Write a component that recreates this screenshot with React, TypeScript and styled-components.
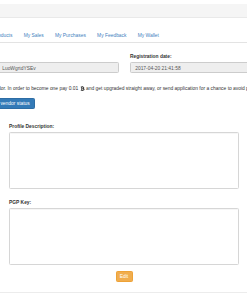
import styled, { createGlobalStyle } from "styled-components";
import { FaBtc } from "react-icons/fa";

const GlobalStyle = createGlobalStyle`
  html, body {
    margin: 0;
    padding: 0;
    background: #fff;
    overflow: hidden;
  }
  body {
    font-family: "Liberation Sans", Arial, sans-serif;
    font-size: 4.9px;
    line-height: 7px;
    color: #333;
  }
`;

const TopBar = styled.div`
  margin-top: 4px;
  height: 13px;
  background: #f5f5f5;
  border-bottom: 1px solid #e9e9e9;
`;

const Page = styled.div`
  margin-left: -20px;
  width: 287px;
`;

const Tabs = styled.ul`
  display: flex;
  list-style: none;
  margin: 10px 0 0;
  padding: 0;
  border-bottom: 1px solid #e3e3e3;
`;

const Tab = styled.li`
  margin-right: 0.7px;
  a {
    display: block;
    padding: 3.5px 5.25px;
    color: #3f7fc0;
    text-decoration: none;
    white-space: nowrap;
  }
`;

const Fields = styled.div`
  display: grid;
  grid-template-columns: 122px 122px;
  column-gap: 11px;
  align-items: end;
  margin: 10px 0 0 17px;
`;

const Field = styled.div`
  display: flex;
  flex-direction: column;
`;

const Label = styled.label`
  display: block;
  font-weight: bold;
  margin-bottom: 1.75px;
  white-space: nowrap;
`;

const Input = styled.div`
  box-sizing: border-box;
  height: 11.5px;
  padding: 2.2px 4.2px;
  background: #eee;
  border: 0.5px solid #ccc;
  border-radius: 1.4px;
  color: #555;
  white-space: nowrap;
  overflow: hidden;
`;

const Vendor = styled.div`
  padding-left: 6px;
  margin-top: 12px;
`;

const Notice = styled.p`
  margin: 0 0 5.5px;
  white-space: nowrap;
  svg {
    font-size: 5.2px;
    vertical-align: -0.6px;
    color: #222;
  }
`;

const Button = styled.button<{ $tone: "primary" | "warning" }>`
  display: inline-block;
  box-sizing: border-box;
  height: 11.5px;
  padding: 0 4.2px;
  border: 0.5px solid ${(p) => (p.$tone === "primary" ? "#2e6da4" : "#eea236")};
  border-radius: 1.4px;
  background: ${(p) => (p.$tone === "primary" ? "#337ab7" : "#f0ad4e")};
  color: #fff;
  font-family: inherit;
  font-size: 4.9px;
  line-height: 7px;
  white-space: nowrap;
`;

const Panel = styled.div`
  margin: 13.5px 0 0 9px;
  width: 230px;
`;

const Group = styled.div`
  & + & {
    margin-top: 10.5px;
  }
`;

const TextArea = styled.textarea`
  display: block;
  box-sizing: border-box;
  width: 100%;
  height: 57px;
  margin: 0;
  border: 0.5px solid #d6d6d6;
  border-radius: 1.4px;
  box-shadow: inset 0 0.4px 0.6px rgba(0, 0, 0, 0.07);
  resize: none;
  background: #fff;
`;

const Actions = styled.div`
  display: flex;
  justify-content: center;
  margin-top: 6px;
  button {
    width: 17px;
    padding: 0;
  }
`;

const Footer = styled.div`
  margin-top: 10px;
  border-top: 1px solid #ececec;
`;

const tabs = ["My Products", "My Sales", "My Purchases", "My Feedback", "My Wallet"];

function App() {
  return (
    <>
      <GlobalStyle />
      <TopBar />
      <Page>
        <Tabs>
          {tabs.map((t) => (
            <Tab key={t}>
              <a href="#">{t}</a>
            </Tab>
          ))}
        </Tabs>
        <Fields>
          <Field>
            <Input>LuoWgrtdYSEv</Input>
          </Field>
          <Field>
            <Label>Registration date:</Label>
            <Input>2017-04-20 21:41:58</Input>
          </Field>
        </Fields>
        <Vendor>
          <Notice>
            a vendor. In order to become one pay 0.01 <FaBtc /> and get upgraded straight away, or send
            application for a chance to avoid paying.
          </Notice>
          <Button $tone="primary">Get vendor status</Button>
        </Vendor>
      </Page>
      <Panel>
        <Group>
          <Label>Profile Description:</Label>
          <TextArea />
        </Group>
        <Group>
          <Label>PGP Key:</Label>
          <TextArea />
        </Group>
        <Actions>
          <Button $tone="warning">Edit</Button>
        </Actions>
      </Panel>
      <Footer />
    </>
  );
}

export default App;
